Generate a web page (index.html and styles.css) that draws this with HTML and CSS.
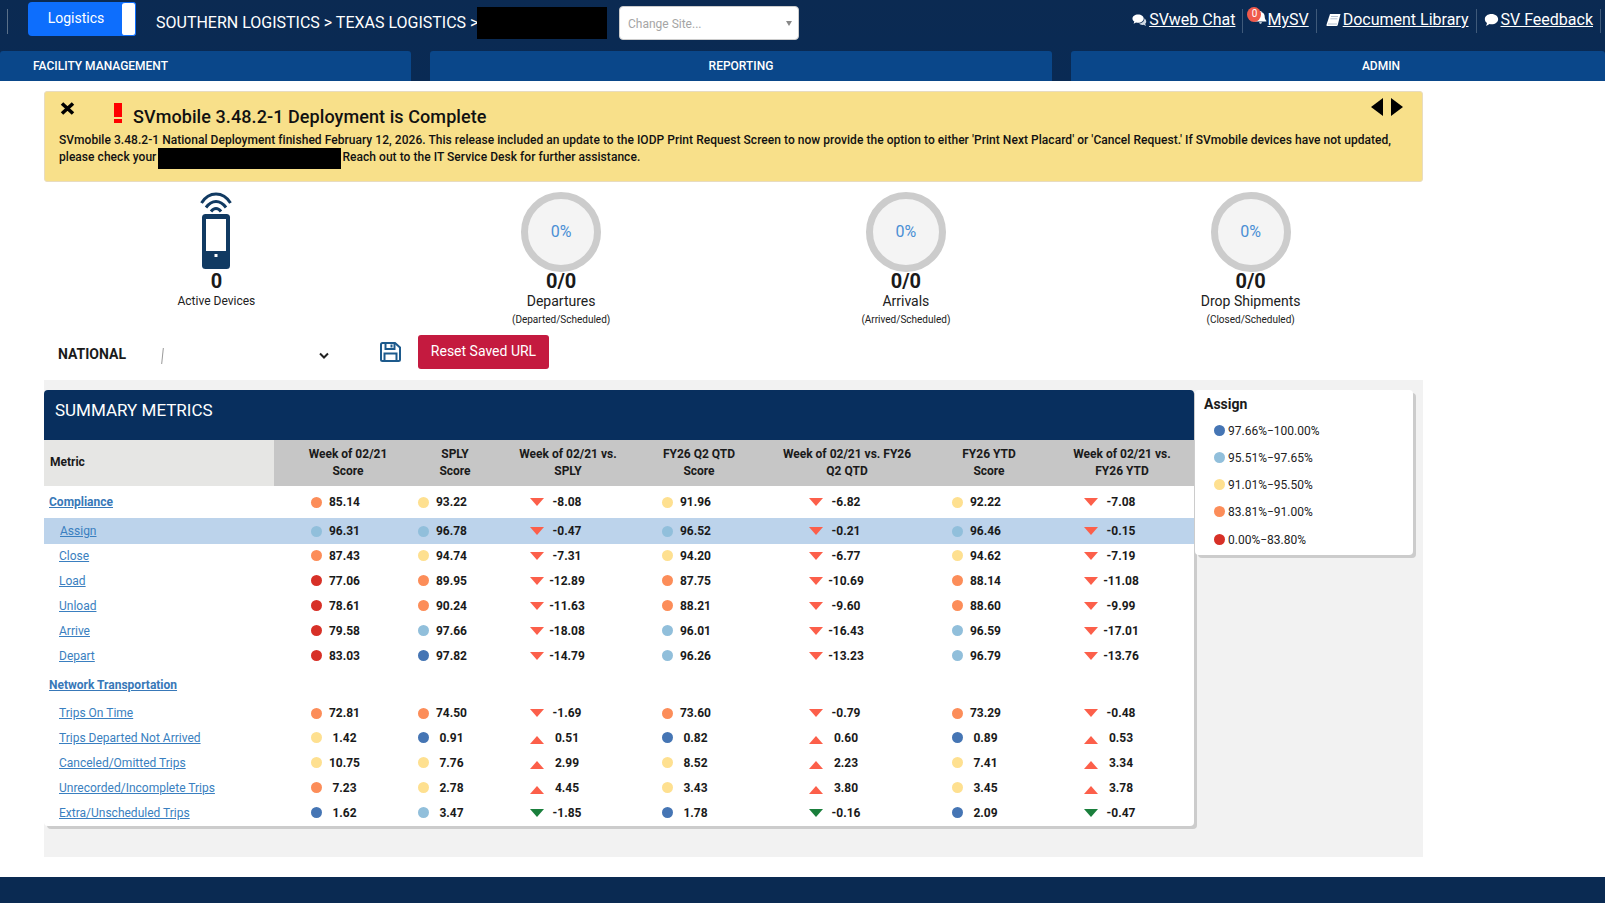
FILE: index.html
```html
<!DOCTYPE html>
<html lang="en">
<head>
<meta charset="utf-8">
<title>Logistics</title>
<link rel="stylesheet" href="styles.css">
</head>
<body>
<header class="top">
  <div class="topbar">
    <span class="divider"></span>
    <div class="app-btn"><span class="app-name">Logistics</span><span class="app-toggle"></span></div>
    <div class="crumb">SOUTHERN LOGISTICS &gt; TEXAS LOGISTICS &gt;</div>
    <span class="redact redact-site"></span>
    <div class="site-select"><span>Change Site...</span><i class="caret"></i></div>
    <nav class="links">
      <a class="link link-chat"><svg class="ic" viewBox="0 0 16 14"><path d="M13.300 5c.1 3-2.600 5.500-6 5.700 1 1 2.300 1.500 3.700 1.500.5 0 1-.1 1.500-.2l2.300 1.300-.7-2.200c.8-.7 1.100-1.500 1.100-2.400 0-1.500-.9-2.800-1.900-3.700z" fill="#cfd9e4"/><path d="M6.500 1C3 1 .5 3 .5 5.400c0 1.300.8 2.500 2 3.300L1.700 11l2.600-1.400c.7.2 1.400.3 2.200.3 3.500 0 6-2 6-4.500S10 1 6.500 1z" fill="#fff"/></svg><u>SVweb Chat</u></a>
      <a class="link link-mysv"><svg class="ic ic-bell" viewBox="0 0 14 15"><path d="M7 1a1.200 1.200 0 0 1 1.200 1.300C10.300 2.800 11.500 4.600 11.500 7c0 2.500.8 3.400 1.800 4.400v1H.700v-1C1.700 10.400 2.500 9.500 2.500 7c0-2.400 1.200-4.200 3.300-4.700A1.200 1.200 0 0 1 7 1zM5.500 13.200h3a1.500 1.500 0 0 1-3 0z" fill="#fff"/></svg><span class="badge">0</span><u>MySV</u></a>
      <a class="link link-doc"><svg class="ic" viewBox="0 0 15 14"><path d="M4 1h10.500l-2.800 11.200c-.2.600-.6.800-1.200.8H1.500C.7 13 .3 12.400.5 11.700z" fill="#fff"/><path d="M5 3.500h7M4.400 5.800h7" stroke="#9fb0c4" stroke-width=".8"/><path d="M2 11h9" stroke="#9fb0c4" stroke-width=".8"/></svg><u>Document Library</u></a>
      <a class="link link-feed"><svg class="ic" viewBox="0 0 14 13"><path d="M7 1C3.400 1 .8 3.100.8 5.800c0 1.400.8 2.700 2 3.600L2 12l3.200-1.700c.6.100 1.200.2 1.800.2 3.600 0 6.200-2.100 6.200-4.700S10.600 1 7 1z" fill="#fff"/></svg><u>SV Feedback</u></a>
    </nav>
  </div>
  <div class="tabs">
    <div class="tab tab-fm">FACILITY MANAGEMENT</div>
    <div class="tab tab-rep">REPORTING</div>
    <div class="tab tab-adm">ADMIN</div>
  </div>
</header>

<main class="main">
  <section class="notice">
    <svg class="notice-close" viewBox="0 0 15 13"><path d="M2 1.500l11 10M13 1.500l-11 10" fill="none" stroke="#000" stroke-width="3.600"/></svg>
    <div class="notice-head"><svg class="bang" viewBox="0 0 8 20"><rect width="8" height="14" fill="#f00"/><rect y="16" width="8" height="4" fill="#f00"/></svg><h2>SVmobile 3.48.2-1 Deployment is Complete</h2></div>
    <div class="notice-arrows"><i class="arr arr-l"></i><i class="arr arr-r"></i></div>
    <div class="notice-body">
      <p class="nline">SVmobile 3.48.2-1 National Deployment finished February 12, 2026. This release included an update to the IODP Print Request Screen to now provide the option to either 'Print Next Placard' or 'Cancel Request.' If SVmobile devices have not updated,</p>
      <div class="nline nline-flex"><span>please check your</span><span class="redact redact-inline"></span><span>Reach out to the IT Service Desk for further assistance.</span></div>
    </div>
  </section>

  <section class="stats">
    <div class="stat">
      <svg class="phone" viewBox="0 0 34 77">
        <path d="M2.500 11C10 -1 24 -1 31.500 11" fill="none" stroke="#113a62" stroke-width="3"/>
        <path d="M7 15.500C13 7.500 21 7.500 27 15.500" fill="none" stroke="#113a62" stroke-width="3"/>
        <path d="M12 19.500C15 15.500 19 15.500 22 19.500" fill="none" stroke="#113a62" stroke-width="3"/>
        <rect x="3" y="22" width="28" height="55" rx="3.500" fill="#113a62"/>
        <rect x="7" y="27" width="20" height="32" fill="#fff"/>
        <rect x="15.500" y="62" width="3" height="3" fill="#fff"/>
      </svg>
      <div class="stat-num">0</div>
      <div class="stat-small">Active Devices</div>
    </div>
    <div class="stat">
      <div class="ring">0%</div>
      <div class="stat-num">0/0</div>
      <div class="stat-label">Departures</div>
      <div class="stat-sub">(Departed/Scheduled)</div>
    </div>
    <div class="stat">
      <div class="ring">0%</div>
      <div class="stat-num">0/0</div>
      <div class="stat-label">Arrivals</div>
      <div class="stat-sub">(Arrived/Scheduled)</div>
    </div>
    <div class="stat">
      <div class="ring">0%</div>
      <div class="stat-num">0/0</div>
      <div class="stat-label">Drop Shipments</div>
      <div class="stat-sub">(Closed/Scheduled)</div>
    </div>
  </section>

  <section class="filters">
    <span class="nat">NATIONAL</span>
    <div class="picker"><i class="slash"></i><svg class="chev" viewBox="0 0 10 7"><path d="M1 1.500l4 4 4-4" fill="none" stroke="#222" stroke-width="2"/></svg></div>
    <svg class="save" viewBox="0 0 21 20"><path d="M1 2.500A1.500 1.500 0 0 1 2.500 1H15l5 4.500V17.500a1.500 1.500 0 0 1-1.500 1.500h-16A1.500 1.500 0 0 1 1 17.500z" fill="none" stroke="#1d5a8c" stroke-width="2"/><path d="M5.500 1v6h9V1M4.500 19v-7.500h12V19" fill="none" stroke="#1d5a8c" stroke-width="2"/><rect x="10.500" y="2.500" width="2" height="3" fill="#1d5a8c"/></svg>
    <button class="reset">Reset Saved URL</button>
  </section>

  <section class="panel">
    <div class="card">
      <h3 class="card-title">SUMMARY METRICS</h3>
      <table class="metrics">
        <colgroup><col class="c0"><col class="c1"><col class="c2"><col class="c3"><col class="c4"><col class="c5"><col class="c6"><col class="c7"></colgroup>
        <thead>
          <tr><th class="th-metric">Metric</th><th class="first">Week of 02/21<br>Score</th><th>SPLY<br>Score</th><th>Week of 02/21 vs.<br>SPLY</th><th>FY26 Q2 QTD<br>Score</th><th>Week of 02/21 vs. FY26<br>Q2 QTD</th><th>FY26 YTD<br>Score</th><th>Week of 02/21 vs.<br>FY26 YTD</th></tr>
        </thead>
        <tbody>
          <tr class="sect sect-a"><td class="name"><a>Compliance</a></td>
            <td class="first"><div class="v"><i class="dot o"></i><b>85.14</b></div></td><td><div class="v"><i class="dot y"></i><b>93.22</b></div></td><td><div class="v"><i class="tri dn"></i><b>-8.08</b></div></td><td><div class="v"><i class="dot y"></i><b>91.96</b></div></td><td><div class="v"><i class="tri dn"></i><b>-6.82</b></div></td><td><div class="v"><i class="dot y"></i><b>92.22</b></div></td><td><div class="v"><i class="tri dn"></i><b>-7.08</b></div></td></tr>
          <tr class="row hi"><td class="name sub"><a>Assign</a></td>
            <td class="first"><div class="v"><i class="dot l"></i><b>96.31</b></div></td><td><div class="v"><i class="dot l"></i><b>96.78</b></div></td><td><div class="v"><i class="tri dn"></i><b>-0.47</b></div></td><td><div class="v"><i class="dot l"></i><b>96.52</b></div></td><td><div class="v"><i class="tri dn"></i><b>-0.21</b></div></td><td><div class="v"><i class="dot l"></i><b>96.46</b></div></td><td><div class="v"><i class="tri dn"></i><b>-0.15</b></div></td></tr>
          <tr class="row"><td class="name sub"><a>Close</a></td>
            <td class="first"><div class="v"><i class="dot o"></i><b>87.43</b></div></td><td><div class="v"><i class="dot y"></i><b>94.74</b></div></td><td><div class="v"><i class="tri dn"></i><b>-7.31</b></div></td><td><div class="v"><i class="dot y"></i><b>94.20</b></div></td><td><div class="v"><i class="tri dn"></i><b>-6.77</b></div></td><td><div class="v"><i class="dot y"></i><b>94.62</b></div></td><td><div class="v"><i class="tri dn"></i><b>-7.19</b></div></td></tr>
          <tr class="row"><td class="name sub"><a>Load</a></td>
            <td class="first"><div class="v"><i class="dot r"></i><b>77.06</b></div></td><td><div class="v"><i class="dot o"></i><b>89.95</b></div></td><td><div class="v"><i class="tri dn"></i><b>-12.89</b></div></td><td><div class="v"><i class="dot o"></i><b>87.75</b></div></td><td><div class="v"><i class="tri dn"></i><b>-10.69</b></div></td><td><div class="v"><i class="dot o"></i><b>88.14</b></div></td><td><div class="v"><i class="tri dn"></i><b>-11.08</b></div></td></tr>
          <tr class="row"><td class="name sub"><a>Unload</a></td>
            <td class="first"><div class="v"><i class="dot r"></i><b>78.61</b></div></td><td><div class="v"><i class="dot o"></i><b>90.24</b></div></td><td><div class="v"><i class="tri dn"></i><b>-11.63</b></div></td><td><div class="v"><i class="dot o"></i><b>88.21</b></div></td><td><div class="v"><i class="tri dn"></i><b>-9.60</b></div></td><td><div class="v"><i class="dot o"></i><b>88.60</b></div></td><td><div class="v"><i class="tri dn"></i><b>-9.99</b></div></td></tr>
          <tr class="row"><td class="name sub"><a>Arrive</a></td>
            <td class="first"><div class="v"><i class="dot r"></i><b>79.58</b></div></td><td><div class="v"><i class="dot l"></i><b>97.66</b></div></td><td><div class="v"><i class="tri dn"></i><b>-18.08</b></div></td><td><div class="v"><i class="dot l"></i><b>96.01</b></div></td><td><div class="v"><i class="tri dn"></i><b>-16.43</b></div></td><td><div class="v"><i class="dot l"></i><b>96.59</b></div></td><td><div class="v"><i class="tri dn"></i><b>-17.01</b></div></td></tr>
          <tr class="row"><td class="name sub"><a>Depart</a></td>
            <td class="first"><div class="v"><i class="dot r"></i><b>83.03</b></div></td><td><div class="v"><i class="dot b"></i><b>97.82</b></div></td><td><div class="v"><i class="tri dn"></i><b>-14.79</b></div></td><td><div class="v"><i class="dot l"></i><b>96.26</b></div></td><td><div class="v"><i class="tri dn"></i><b>-13.23</b></div></td><td><div class="v"><i class="dot l"></i><b>96.79</b></div></td><td><div class="v"><i class="tri dn"></i><b>-13.76</b></div></td></tr>
          <tr class="sect sect-b"><td class="name" colspan="8"><a>Network Transportation</a></td></tr>
          <tr class="row row-t"><td class="name sub"><a>Trips On Time</a></td>
            <td class="first"><div class="v"><i class="dot o"></i><b>72.81</b></div></td><td><div class="v"><i class="dot o"></i><b>74.50</b></div></td><td><div class="v"><i class="tri dn"></i><b>-1.69</b></div></td><td><div class="v"><i class="dot o"></i><b>73.60</b></div></td><td><div class="v"><i class="tri dn"></i><b>-0.79</b></div></td><td><div class="v"><i class="dot o"></i><b>73.29</b></div></td><td><div class="v"><i class="tri dn"></i><b>-0.48</b></div></td></tr>
          <tr class="row"><td class="name sub"><a>Trips Departed Not Arrived</a></td>
            <td class="first"><div class="v"><i class="dot y"></i><b>1.42</b></div></td><td><div class="v"><i class="dot b"></i><b>0.91</b></div></td><td><div class="v"><i class="tri up"></i><b>0.51</b></div></td><td><div class="v"><i class="dot b"></i><b>0.82</b></div></td><td><div class="v"><i class="tri up"></i><b>0.60</b></div></td><td><div class="v"><i class="dot b"></i><b>0.89</b></div></td><td><div class="v"><i class="tri up"></i><b>0.53</b></div></td></tr>
          <tr class="row"><td class="name sub"><a>Canceled/Omitted Trips</a></td>
            <td class="first"><div class="v"><i class="dot y"></i><b>10.75</b></div></td><td><div class="v"><i class="dot y"></i><b>7.76</b></div></td><td><div class="v"><i class="tri up"></i><b>2.99</b></div></td><td><div class="v"><i class="dot y"></i><b>8.52</b></div></td><td><div class="v"><i class="tri up"></i><b>2.23</b></div></td><td><div class="v"><i class="dot y"></i><b>7.41</b></div></td><td><div class="v"><i class="tri up"></i><b>3.34</b></div></td></tr>
          <tr class="row"><td class="name sub"><a>Unrecorded/Incomplete Trips</a></td>
            <td class="first"><div class="v"><i class="dot o"></i><b>7.23</b></div></td><td><div class="v"><i class="dot y"></i><b>2.78</b></div></td><td><div class="v"><i class="tri up"></i><b>4.45</b></div></td><td><div class="v"><i class="dot y"></i><b>3.43</b></div></td><td><div class="v"><i class="tri up"></i><b>3.80</b></div></td><td><div class="v"><i class="dot y"></i><b>3.45</b></div></td><td><div class="v"><i class="tri up"></i><b>3.78</b></div></td></tr>
          <tr class="row"><td class="name sub"><a>Extra/Unscheduled Trips</a></td>
            <td class="first"><div class="v"><i class="dot b"></i><b>1.62</b></div></td><td><div class="v"><i class="dot l"></i><b>3.47</b></div></td><td><div class="v"><i class="tri gr"></i><b>-1.85</b></div></td><td><div class="v"><i class="dot b"></i><b>1.78</b></div></td><td><div class="v"><i class="tri gr"></i><b>-0.16</b></div></td><td><div class="v"><i class="dot b"></i><b>2.09</b></div></td><td><div class="v"><i class="tri gr"></i><b>-0.47</b></div></td></tr>
        </tbody>
      </table>
    </div>
    <aside class="legend">
      <h4>Assign</h4>
      <div class="leg"><i class="dot b"></i>97.66%−100.00%</div>
      <div class="leg"><i class="dot l"></i>95.51%−97.65%</div>
      <div class="leg"><i class="dot y"></i>91.01%−95.50%</div>
      <div class="leg"><i class="dot o"></i>83.81%−91.00%</div>
      <div class="leg leg-last"><i class="dot r"></i>0.00%−83.80%</div>
    </aside>
  </section>
</main>
<footer class="foot"></footer>
</body>
</html>
```
FILE: styles.css
```css
* { box-sizing: border-box; }
html, body { margin: 0; padding: 0; height: 903px; overflow: hidden; }
body { font-family: Roboto, "Liberation Sans", sans-serif; font-size: 12px; color: #212121; background: #fff; }
h2, h3, h4, p { margin: 0; }

.top { background: linear-gradient(#0b2a52, #092a54); height: 81px; }
.topbar { height: 51px; display: flex; align-items: flex-start; }
.divider { width: 1px; height: 25px; margin: 9px 0 0 7px; background: #5a7089; }
.app-btn { margin: 2px 0 0 20px; width: 108px; height: 34px; background: #0d6efd; border-radius: 4px; display: flex; color: #fff; }
.app-name { flex: 1; font-size: 14px; text-align: center; line-height: 32px; padding-left: 2px; }
.app-toggle { width: 14px; background: #fff; border-radius: 3px; border: 1px solid #0d6efd; border-left: 0; }
.crumb { margin: 0 0 0 20px; font-size: 16px; line-height: 46px; color: #fff; white-space: nowrap; width: 321px; }
.redact { display: inline-block; background: #000; }
.redact-site { width: 130px; height: 32px; margin-top: 7px; }
.site-select { margin: 6px 0 0 12px; width: 180px; height: 34px; background: #fff; border: 1px solid #ccc; border-radius: 4px; color: #a5a5a5; font-size: 12px; line-height: 34px; padding-left: 8px; position: relative; }
.caret { position: absolute; right: 6px; top: 14px; border: 3px solid transparent; border-top: 5px solid #888; border-bottom: 0; }
.links { margin-left: auto; display: flex; padding-top: 9px; margin-right: 4px; }
.link { display: flex; align-items: flex-start; height: 24px; line-height: 21px; color: #fff; font-size: 16px; border-right: 1px solid #3f5a7a; padding-right: 7px; position: relative; }
.link u { text-decoration: underline; }
.ic { width: 15px; height: 14px; margin: 4px 2px 0 0; flex: none; }
.link-mysv { padding-left: 24px; }
.ic-bell { position: absolute; left: 10px; top: 1px; margin: 0; }
.badge { position: absolute; left: 4px; top: -2px; width: 14px; height: 15px; border-radius: 50%; background: #ef5a4c; color: #fff; font-size: 10px; line-height: 14px; text-align: center; }
.link-doc { padding-left: 9px; }
.link-feed { padding-left: 7px; }

.tabs { display: flex; gap: 19px; height: 30px; overflow: hidden; }
.tab { background: #0a478a; color: #fff; font-size: 12px; font-weight: 500; line-height: 31px; border-radius: 3px 3px 0 0; flex: none; text-align: center; }
.tab-fm { width: 411px; text-align: left; padding-left: 33px; }
.tab-rep { width: 622px; }
.tab-adm { width: 534px; padding-left: 86px; flex: 1; }

.main { width: 1379px; margin-left: 44px; }
.notice { margin-top: 10px; height: 91px; background: #f8e08a; border: 1px solid #e8dcc0; border-radius: 3px; position: relative; padding: 0 14px; }
.notice-close { position: absolute; left: 15px; top: 10px; width: 15px; height: 13px; }
.notice-head { display: flex; align-items: center; height: 40px; padding: 10px 0 0 55px; }
.bang { width: 8px; height: 20px; flex: none; margin-top: -9px; }
.notice-head h2 { font-size: 18px; font-weight: 500; color: #111; margin-left: 11px; line-height: 24px; letter-spacing: .08px; }
.notice-arrows { position: absolute; right: 19px; top: 6px; display: flex; gap: 8px; }
.arr { width: 0; height: 0; border-top: 9px solid transparent; border-bottom: 9px solid transparent; }
.arr-l { border-right: 12px solid #000; }
.arr-r { border-left: 12px solid #000; }
.notice-body { font-size: 12px; font-weight: 500; color: #111; line-height: 17px; letter-spacing: .043px; }
.nline { height: 17px; white-space: nowrap; }
.nline-flex { display: flex; align-items: center; }
.redact-inline { width: 183px; height: 21px; margin: 0 1px 0 2px; flex: none; position: relative; top: 1px; }

.stats { display: grid; grid-template-columns: repeat(4, 1fr); height: 153px; padding-top: 10px; }
.stat { display: flex; flex-direction: column; align-items: center; }
.phone { width: 34px; height: 77px; margin-bottom: 3px; }
.ring { width: 80px; height: 80px; border-radius: 50%; border: 7px solid #ccc; background: #f4f4f4; color: #4a8fd4; font-size: 16px; display: flex; align-items: center; justify-content: center; flex: none; padding-bottom: 2px; }
.stat-num { font-size: 20px; font-weight: 700; line-height: 18px; color: #1a1a1a; }
.stat-small { font-size: 12px; line-height: 16px; margin-top: 3px; }
.stat-label { font-size: 14px; line-height: 17px; margin-top: 3px; }
.stat-sub { font-size: 10px; line-height: 12px; margin-top: 4px; }

.filters { height: 34px; display: flex; align-items: center; margin-bottom: 11px; }
.nat { font-size: 14px; font-weight: 700; width: 104px; padding-left: 14px; margin-top: 4px; color: #1a1a1a; }
.picker { width: 232px; display: flex; align-items: center; height: 20px; margin-top: 7px; }
.slash { width: 1px; height: 16px; margin: 0 0 0 14px; background: #999; transform: rotate(6deg); }
.chev { width: 10px; height: 7px; margin-left: 156px; }
.save { width: 21px; height: 20px; margin: 0 17px 0 0; flex: none; }
.reset { width: 131px; height: 34px; background: #c41a3f; color: #fff; border: 0; border-radius: 3px; font: 14px Roboto, "Liberation Sans", sans-serif; padding: 0 0 2px; }

.panel { background: #f2f2f2; height: 477px; padding-top: 10px; display: flex; align-items: flex-start; }
.card { width: 1150px; background: #fff; border-radius: 4px; box-shadow: 3px 3px 0 #ccc; height: 436px; overflow: hidden; }
.card-title { background: #082f5e; color: #fff; height: 50px; font-size: 17px; font-weight: 400; padding: 10px 0 0 11px; line-height: 20px; }
.metrics { border-collapse: collapse; table-layout: fixed; width: 1150px; }
.c0 { width: 230px; } .c1 { width: 132px; } .c2 { width: 98px; } .c3 { width: 128px; } .c4 { width: 134px; } .c5 { width: 162px; } .c6 { width: 122px; } .c7 { width: 144px; }
th { background: #c6c6c6; height: 46px; padding: 0; font-size: 12px; font-weight: 700; line-height: 17.500px; color: #1a1a1a; text-align: center; }
th.th-metric { background: #e6e6e4; text-align: left; padding-left: 6px; }
th.first, td.first { padding-left: 16px; }
td { padding: 0; }
.sect td { vertical-align: middle; }
.sect-a { height: 32px; }
.sect-b { height: 31px; }
.row { height: 25px; }
.row td { padding-bottom: 2px; }
.hi { height: 26px; background: #bcd3eb; }
.hi td, .row-t td { padding-bottom: 0; }
.row-t { height: 26px; }
.name { font-size: 12px; padding-left: 5px; }
.name a { color: #3a7fc0; text-decoration: underline; }
.sect .name a { font-weight: 700; color: #3878b8; }
.name.sub { padding-left: 15px; }
.hi .name.sub { padding-left: 16px; }
.v { display: flex; align-items: center; justify-content: center; padding-right: 18px; }
.v b { width: 46px; text-align: center; font-weight: 700; font-size: 12px; color: #1a1a1a; }
.dot { display: inline-block; width: 11px; height: 11px; border-radius: 50%; flex: none; }
.dot.b { background: #4575b4; } .dot.l { background: #91bfdb; } .dot.y { background: #fee090; } .dot.o { background: #fc8d59; } .dot.r { background: #d73027; }
.tri { width: 0; height: 0; margin: 0 .5px 0 1.500px; border-left: 7px solid transparent; border-right: 7px solid transparent; flex: none; }
.tri.dn { border-top: 8px solid #fc5f4a; }
.tri.up { border-bottom: 8px solid #fc5f4a; margin-top: 4px; }
.tri.gr { border-top: 8px solid #1a7f3c; }

.legend { margin-left: 1px; width: 218px; height: 165px; background: #fff; border-radius: 4px; box-shadow: 3px 3px 0 #ccc; padding: 5px 0 0 9px; }
.legend h4 { font-size: 14px; font-weight: 700; line-height: 18px; color: #1a1a1a; margin-bottom: 4px; }
.leg { display: flex; align-items: center; height: 27px; font-size: 12px; color: #222; padding-left: 10px; gap: 3px; }
.leg-last { height: 29px; }

.foot { position: fixed; left: 0; right: 0; bottom: 0; height: 26px; background: #0a2a52; }
```
